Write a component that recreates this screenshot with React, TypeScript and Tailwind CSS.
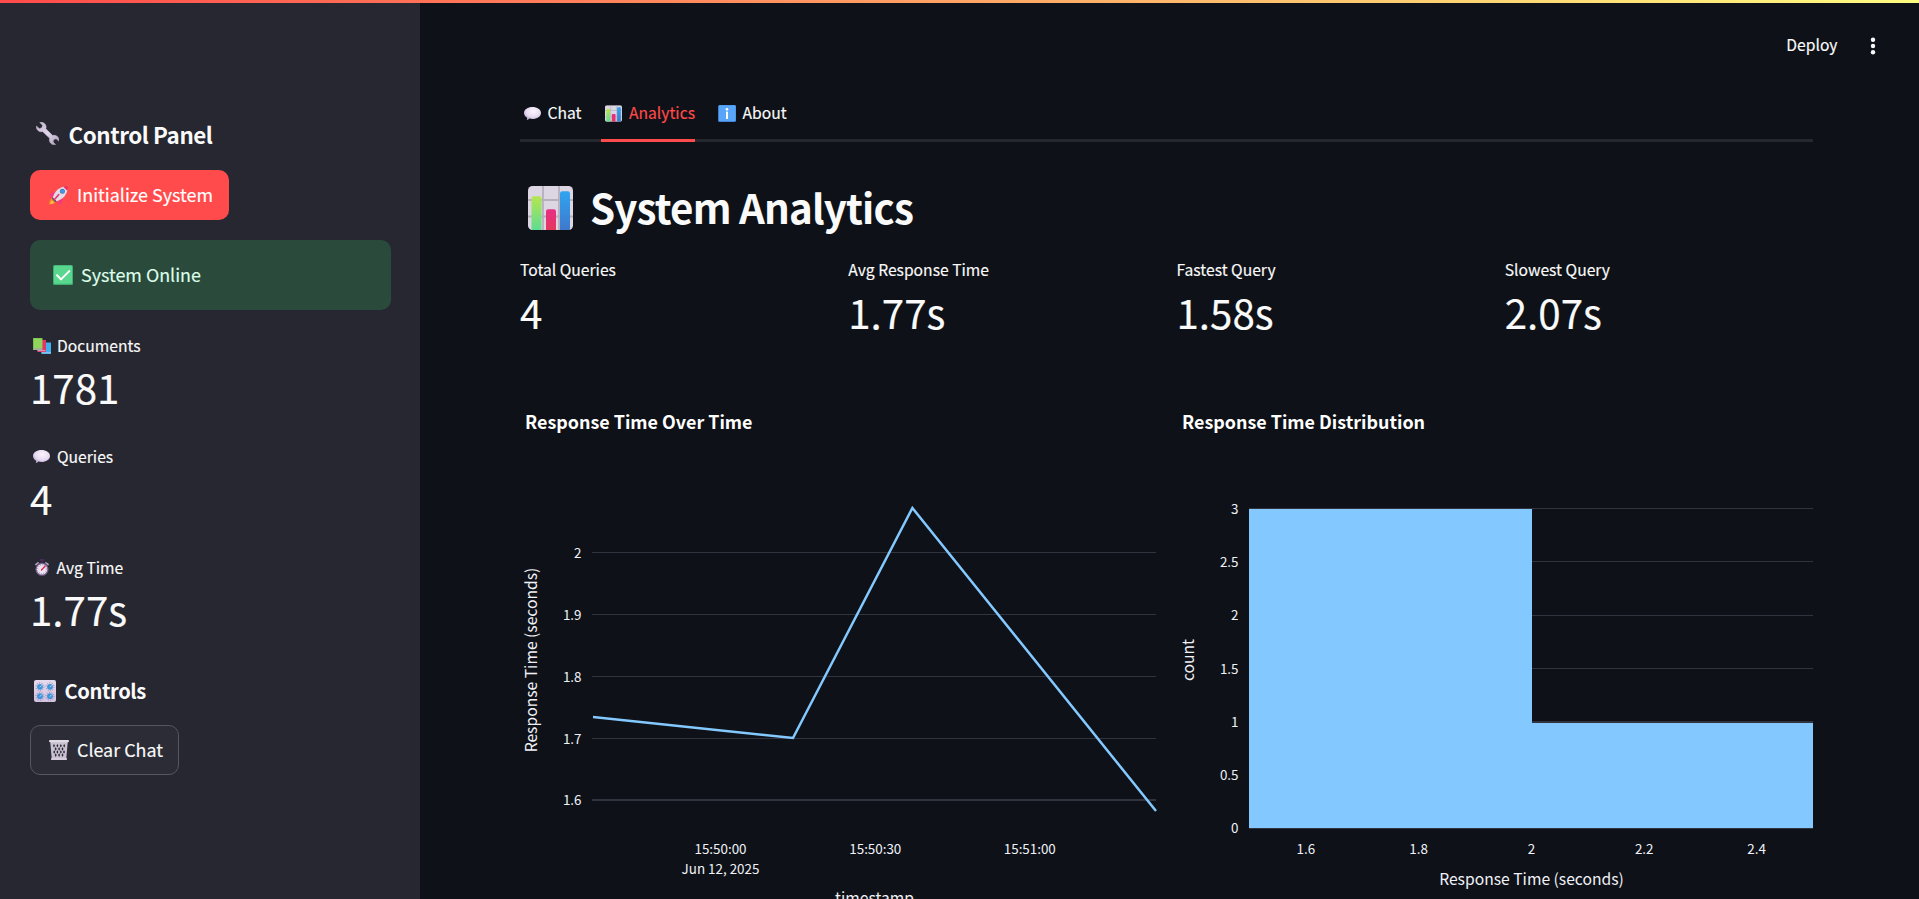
import type { ReactNode } from "react";

const FONT = "font-['Noto_Sans_CJK_SC','Noto_Sans_CJK_JP',sans-serif]";

/* ---------- icons ---------- */

type IconProps = { className: string };

function Wrench({ className }: IconProps) {
  return (
    <svg viewBox="0 0 32 32" className={className}>
      <defs>
        <linearGradient id="wr" x1="0" y1="0" x2="1" y2="1">
          <stop offset="0" stopColor="#bdb3c6" />
          <stop offset=".5" stopColor="#e2d5ee" />
          <stop offset="1" stopColor="#a79db5" />
        </linearGradient>
      </defs>
      <path
        fill="url(#wr)"
        stroke="url(#wr)"
        strokeWidth=".8"
        d="M5.200 .6C9.500-.4 13.600 2.200 14 6.500c.1 1-.1 2-.4 2.800l9.500 9.500c3.700-1.100 7.700 1 8.700 4.700.3 1 .3 2.100.1 3.100l-4-3.400-3.300 1.200-.9 3.400 3.600 3.600c-4.200 1-8.100-1.700-8.600-5.800-.1-1 0-2 .4-2.900L9.300 13.300C5.700 14.300 1.800 12.300.8 8.700c-.3-1-.4-2-.2-3l4 3.600 3.600-1.200 1-3.600z"
      />
    </svg>
  );
}

function Rocket({ className }: IconProps) {
  return (
    <svg viewBox="0 0 20 20" className={className}>
      <path d="M5 10 1 12.500 1.500 9 6 6.500z" fill="#f0388a" />
      <path d="M10.500 15 9 19.500 12.500 18.500 14 13.500z" fill="#f0388a" />
      <path d="M4 13c-3 .5-4 3-3.800 6.500C4 19.500 6.500 18.500 7 16z" fill="#f28a2a" />
      <path d="M2.800 15.500c-1 .8-1.500 2-1.300 3.300 1.500.2 2.700-.4 3.300-1.500z" fill="#ffc04d" />
      <path d="M3.800 12.800C5.500 6 10 1.500 19.300.7 18.600 9.500 14 14.500 7.200 16.200z" fill="#e4dbea" />
      <path d="M14 1.600c1.600-.5 3.400-.8 5.300-.9-.1 1.900-.4 3.600-.9 5.200z" fill="#f0305f" />
      <path d="M3.500 12.200 7.800 16.500 6.200 17 3 13.800z" fill="#5a4772" />
      <path d="M9.800 9.500 5.500 14.500" stroke="#e8366f" strokeWidth="1.600" strokeLinecap="round" />
      <circle cx="13.400" cy="6.300" r="2.500" fill="#5b6f9a" />
      <circle cx="13.400" cy="6.300" r="1.800" fill="#3d9cf2" />
    </svg>
  );
}

function Check({ className }: IconProps) {
  return (
    <svg viewBox="0 0 20 20" className={className}>
      <rect width="20" height="20" rx="1.500" fill="#3fae74" />
      <rect x="1" y=".8" width="18" height="18" rx="1" fill="#5ad78f" />
      <path d="m4 10.200 4 4.200 8.300-8.300" fill="none" stroke="#fff" strokeWidth="2" strokeLinecap="round" strokeLinejoin="round" />
    </svg>
  );
}

function Books({ className }: IconProps) {
  return (
    <svg viewBox="0 0 18 16" className={className}>
      <rect x="8.500" y="4.500" width="9.500" height="11.500" fill="#3fb0ee" />
      <rect x="8.500" y="14.300" width="9.500" height="1" fill="#a9c6e8" />
      <rect x="4.500" y="2" width="8.500" height="12" fill="#e83367" />
      <rect x="4.500" y="12" width="8" height="1.200" fill="#c59bb8" />
      <rect width="9.300" height="12" fill="#76b947" />
      <rect x=".8" y=".5" width="8.500" height="9.800" fill="#8fd75c" />
      <rect x=".5" y="10.500" width="8.800" height="1.200" fill="#b8a9c4" />
    </svg>
  );
}

function Bubble({ className }: IconProps) {
  return (
    <svg viewBox="0 0 17 13" className={className}>
      <defs>
        <radialGradient id="bu" cx=".55" cy=".35" r=".65">
          <stop offset="0" stopColor="#faf4fc" />
          <stop offset=".65" stopColor="#e6daf0" />
          <stop offset="1" stopColor="#b9a5cf" />
        </radialGradient>
      </defs>
      <path
        fill="url(#bu)"
        d="M8.500 0C13.200 0 17 2.500 17 6s-3.800 6-8.500 6c-1.200 0-2.300-.1-3.300-.4-.4.700-1.300 1.400-2.400 1.300.4-.7.400-1.500.1-2.300C1.100 9.500 0 7.900 0 6c0-3.500 3.800-6 8.500-6z"
      />
    </svg>
  );
}

function Stopwatch({ className }: IconProps) {
  return (
    <svg viewBox="0 0 14 17" className={className}>
      <rect x="4.500" y="0" width="5" height="2" rx=".8" fill="#4a2a5c" />
      <rect x="6" y="1.500" width="2" height="2.500" fill="#3e2750" />
      <path d="m1 5.500 2-1.600M13 5.500l-2-1.600" stroke="#a899b8" strokeWidth="1.800" strokeLinecap="round" />
      <circle cx="7" cy="10.300" r="6.500" fill="#77628d" />
      <circle cx="7" cy="10.300" r="5.200" fill="#ece4f2" />
      <circle cx="7" cy="10.300" r="4.300" fill="none" stroke="#8b7c9a" strokeWidth=".9" strokeDasharray=".8 1.450" />
      <path d="m6.500 11 3.700-4" stroke="#e0234f" strokeWidth="1.300" strokeLinecap="round" />
    </svg>
  );
}

function Knobs({ className }: IconProps) {
  const spots = [
    [6, 6.8],
    [16, 6.8],
    [6, 16.2],
    [16, 16.2],
  ];
  return (
    <svg viewBox="0 0 22 22" className={className}>
      <defs>
        <linearGradient id="kn" x1="0" y1="0" x2="0" y2="1">
          <stop offset="0" stopColor="#e6dbee" />
          <stop offset="1" stopColor="#d2c0e2" />
        </linearGradient>
      </defs>
      <rect width="22" height="22" rx="2" fill="url(#kn)" />
      {spots.map(([x, y]) => (
        <g key={`${x}-${y}`}>
          <circle cx={x} cy={y} r="4" fill="none" stroke="#8d839b" strokeWidth="1" strokeDasharray="1 1.500" />
          <circle cx={x} cy={y} r="2.900" fill="#3d94d8" />
          <path d={`M${x} ${y}l1.300-1`} stroke="#bfe4ff" strokeWidth=".9" strokeLinecap="round" />
        </g>
      ))}
    </svg>
  );
}

function Basket({ className }: IconProps) {
  return (
    <svg viewBox="0 0 20 20" className={className}>
      <path d="M1.200 1.500h17.600L17.200 19.500H2.800z" fill="#c9c1d0" />
      <g fill="#2b2a33">
        <path d="m5 4 1 1.800-1 1.800-1-1.800zM8.400 4l1 1.800-1 1.800-1-1.800zM11.800 4l1 1.800-1 1.800-1-1.800zM15.200 4l1 1.800-1 1.800-1-1.800z" />
        <path d="m6.700 7.100 1 1.800-1 1.800-1-1.800zM10.100 7.100l1 1.800-1 1.800-1-1.800zM13.500 7.100l1 1.800-1 1.800-1-1.800z" />
        <path d="m5.200 10.200 1 1.800-1 1.800-1-1.800zM8.400 10.200l1 1.800-1 1.800-1-1.800zM11.800 10.200l1 1.800-1 1.800-1-1.800zM15 10.200l1 1.800-1 1.800-1-1.800z" />
        <path d="m6.700 13.300 1 1.800-1 1.800-1-1.800zM10.100 13.300l1 1.800-1 1.800-1-1.800zM13.500 13.300l1 1.800-1 1.800-1-1.800z" />
      </g>
      <rect x="0" y="0" width="20" height="2.200" rx="1" fill="#e0dae4" />
      <rect x="2" y="18" width="16" height="2" rx=".8" fill="#d5cdda" />
    </svg>
  );
}

function BarChart({ className }: IconProps) {
  return (
    <svg viewBox="0 0 45 44" className={className}>
      <defs>
        <linearGradient id="bg" x1="0" y1="0" x2="0" y2="1">
          <stop offset="0" stopColor="#b5e64e" />
          <stop offset="1" stopColor="#5fdc93" />
        </linearGradient>
        <linearGradient id="br" x1="0" y1="0" x2="0" y2="1">
          <stop offset="0" stopColor="#e82f86" />
          <stop offset="1" stopColor="#e4385c" />
        </linearGradient>
        <linearGradient id="bb" x1="0" y1="0" x2="0" y2="1">
          <stop offset="0" stopColor="#30a5f0" />
          <stop offset="1" stopColor="#3f78cc" />
        </linearGradient>
        <clipPath id="bc">
          <rect width="45" height="44" rx="4.500" />
        </clipPath>
      </defs>
      <g clipPath="url(#bc)">
        <rect width="45" height="44" fill="#dcd5e2" />
        <path d="M15 0v44M31 0v44M0 14h45M0 30.500h45" stroke="#b6afbd" strokeWidth="1.800" />
        <path d="M3.500 44V12.500a2.200 2.200 0 0 1 2.200-2.200h5.600a2.200 2.200 0 0 1 2.200 2.200V44z" fill="url(#bg)" />
        <path d="M18 44V25.500a2.200 2.200 0 0 1 2.200-2.200h5.600a2.200 2.200 0 0 1 2.200 2.200V44z" fill="url(#br)" />
        <path d="M32 44V7.500a2.200 2.200 0 0 1 2.200-2.200h5.600A2.200 2.200 0 0 1 42 7.500V44z" fill="url(#bb)" />
      </g>
    </svg>
  );
}

function Info({ className }: IconProps) {
  return (
    <svg viewBox="0 0 18 17" className={className}>
      <rect width="18" height="17" rx="1.500" fill="#3f78c4" />
      <rect x=".9" y=".3" width="16.800" height="15.900" rx="1" fill="#58a6fa" />
      <circle cx="9" cy="4.200" r="1.300" fill="#fff" />
      <rect x="8" y="6.500" width="2" height="7.500" rx=".6" fill="#fff" />
    </svg>
  );
}

/* ---------- sidebar ---------- */

function Metric({ icon, label, value }: { icon?: ReactNode; label: string; value: string }) {
  return (
    <div className="h-[111px]">
      <div className="flex h-7 items-start text-[15.67px] leading-[27px]">
        {icon}
        <span>{label}</span>
      </div>
      <div className="text-[40.3px] leading-[54px]">{value}</div>
    </div>
  );
}

function Sidebar() {
  return (
    <aside className="flex w-[420px] shrink-0 flex-col bg-[#262730] pt-[119px] pr-[29px] pl-[30px]">
      <h2 className="flex h-[30px] items-center text-[22.4px] leading-[30px] font-semibold tracking-[-0.45px] [-webkit-text-stroke:0]">
        <Wrench className="mr-[10px] mb-px ml-[5.500px] h-[23px] w-[23px]" />
        Control Panel
      </h2>
      <button className="mt-[21px] flex h-[50px] w-[199px] items-center rounded-[10px] bg-[#ff4b4b] pb-[2px] pl-[19px] text-[17.9px] text-white">
        <Rocket className="mt-[2px] mr-[8px] h-5 w-5" />
        Initialize System
      </button>
      <div className="mt-5 flex h-[70px] items-center rounded-[10px] bg-[#2a4b3c] pb-px pl-[23px] text-[17.9px] text-[#dffde9]">
        <Check className="mr-[8px] h-5 w-5" />
        System Online
      </div>
      <div className="mt-[22px]">
        <Metric icon={<Books className="mt-[6px] mr-[6px] ml-[3px] h-4 w-[18px]" />} label="Documents" value="1781" />
        <Metric icon={<Bubble className="mt-[7px] mr-[7px] ml-[3px] h-[13px] w-[17px]" />} label="Queries" value="4" />
        <Metric icon={<Stopwatch className="mt-[5px] mr-[8px] ml-[4.500px] h-[17px] w-[14px]" />} label="Avg Time" value="1.77s" />
      </div>
      <h3 className="mt-[12px] flex h-7 items-center text-[20.15px] leading-7 font-semibold tracking-[-0.42px] [-webkit-text-stroke:0]">
        <Knobs className="mr-[8.500px] mb-px ml-1 h-[22px] w-[22px]" />
        Controls
      </h3>
      <button className="mt-[20px] flex h-[50px] w-[149px] items-center rounded-[10px] border border-[#55565f] bg-[#2b2c36] pb-[2px] pl-[18px] text-[17.9px]">
        <Basket className="mt-[2px] mr-[8px] h-5 w-5" />
        Clear Chat
      </button>
    </aside>
  );
}

/* ---------- charts ---------- */

const TICK = "fill-[#f0f2f7] text-[13.4px]";
const AXIS = "fill-[#f0f2f7] text-[15.67px]";

function LineChart() {
  const yTicks = [
    { label: "2", y: 552.5, h: 1 },
    { label: "1.9", y: 614.5, h: 1 },
    { label: "1.8", y: 676.5, h: 1 },
    { label: "1.7", y: 738.5, h: 1 },
    { label: "1.6", y: 800, h: 2 },
  ];
  const xTicks = [
    { label: "15:50:00", x: 720.5 },
    { label: "15:50:30", x: 875.3 },
    { label: "15:51:00", x: 1029.8 },
  ];
  return (
    <svg viewBox="520 400 637 499" className="block h-[499px] w-[637px]">
      <text x="525" y="429" className="fill-white text-[17.9px] font-bold">
        Response Time Over Time
      </text>
      {yTicks.map((t) => (
        <g key={t.label}>
          <line x1="592" x2="1156" y1={t.y} y2={t.y} stroke="#31333f" strokeWidth={t.h} />
          <text x="581.500" y={t.y + 5.5 - t.h / 2 + 0.3} textAnchor="end" className={TICK}>
            {t.label}
          </text>
        </g>
      ))}
      <polyline points="593,717 793,738 912.4,508 1156,811" fill="none" stroke="#83c9ff" strokeWidth="2.500" />
      {xTicks.map((t) => (
        <text key={t.label} x={t.x} y="854" textAnchor="middle" className={TICK}>
          {t.label}
        </text>
      ))}
      <text x="720.5" y="874" textAnchor="middle" className={TICK}>
        Jun 12, 2025
      </text>
      <text x="874.500" y="904" textAnchor="middle" className={AXIS}>
        timestamp
      </text>
      <text transform="translate(537.300 660) rotate(-90)" textAnchor="middle" className={AXIS}>
        Response Time (seconds)
      </text>
    </svg>
  );
}

function Histogram() {
  const yTicks = [
    { label: "3", y: 508.5, h: 1, base: 514 },
    { label: "2.5", y: 561.5, h: 1, base: 567 },
    { label: "2", y: 615.5, h: 1, base: 620 },
    { label: "1.5", y: 668.5, h: 1, base: 674 },
    { label: "1", y: 722, h: 2, base: 727 },
    { label: "0.5", y: 775.5, h: 1, base: 780 },
    { label: "0", y: 828.5, h: 1, base: 833 },
  ];
  const xTicks = [
    { label: "1.6", x: 1305.9 },
    { label: "1.8", x: 1418.6 },
    { label: "2", x: 1531.4 },
    { label: "2.2", x: 1644.2 },
    { label: "2.4", x: 1756.6 },
  ];
  return (
    <svg viewBox="1176 400 637 499" className="block h-[499px] w-[637px]">
      <text x="1182" y="429" className="fill-white text-[17.9px] font-bold">
        Response Time Distribution
      </text>
      {yTicks.map((t) => (
        <g key={t.label}>
          <line x1="1249" x2="1813" y1={t.y} y2={t.y} stroke="#31333f" strokeWidth={t.h} />
          <text x="1238.500" y={t.base} textAnchor="end" className={TICK}>
            {t.label}
          </text>
        </g>
      ))}
      <path d="M1249 509h283v214h281v105h-564z" fill="#83c9ff" />
      {xTicks.map((t) => (
        <text key={t.label} x={t.x} y="854" textAnchor="middle" className={TICK}>
          {t.label}
        </text>
      ))}
      <text x="1531.500" y="885" textAnchor="middle" className={AXIS}>
        Response Time (seconds)
      </text>
      <text transform="translate(1194 660) rotate(-90)" textAnchor="middle" className={AXIS}>
        count
      </text>
    </svg>
  );
}

/* ---------- main ---------- */

function Tabs() {
  return (
    <nav className="flex h-[52px] items-stretch border-b-[3px] border-[#26272f] text-[15.67px]">
      <div className="flex items-center pb-[3px] pl-1">
        <Bubble className="mr-[6.500px] h-[13px] w-[17px]" />
        <span className="w-[53.500px]">Chat</span>
      </div>
      <div className="mb-[-3px] flex w-[94px] items-center border-b-[3px] border-[#ff4b4b] pb-[3px] pl-1 text-[#ff4b4b]">
        <BarChart className="mr-[7px] h-[17px] w-[17px]" />
        Analytics
      </div>
      <div className="ml-[23px] flex items-center pb-[3px]">
        <Info className="mr-[6.500px] h-[17px] w-[18px]" />
        About
      </div>
    </nav>
  );
}

export default function App() {
  const stats = [
    { label: "Total Queries", value: "4" },
    { label: "Avg Response Time", value: "1.77s" },
    { label: "Fastest Query", value: "1.58s" },
    { label: "Slowest Query", value: "2.07s" },
  ];
  return (
    <div
      className={`relative flex h-[899px] w-[1919px] overflow-hidden bg-[#0e1117] text-[#fafafa] [-webkit-text-stroke:0.15px_currentColor] ${FONT}`}
    >
      <div className="absolute inset-x-0 top-0 h-[3px] bg-[linear-gradient(90deg,#ff4b4b,#fffd80)]" />
      <Sidebar />
      <main className="flex grow flex-col">
        <header className="flex h-[90px] items-center justify-end pr-[43.500px] text-[15.67px]">
          <span className="mr-[32px]">Deploy</span>
          <svg viewBox="0 0 6 18" className="mt-px h-[18px] w-[6px]" fill="#fafafa">
            <circle cx="3" cy="2.700" r="2.200" />
            <circle cx="3" cy="9" r="2.200" />
            <circle cx="3" cy="15.300" r="2.200" />
          </svg>
        </header>
        <div className="flex w-[1393px] flex-col pl-[100px]">
          <Tabs />
          <h1 className="mt-[38px] flex h-[54px] items-center text-[40.3px] leading-[54px] font-semibold tracking-[-0.85px] [-webkit-text-stroke:0]">
            <BarChart className="mr-[17px] mb-[-2px] ml-2 h-11 w-[45px]" />
            System Analytics
          </h1>
          <div className="mt-[22px] grid h-[144px] grid-cols-4 gap-5">
            {stats.map((s) => (
              <div key={s.label}>
                <div className="h-[29px] text-[15.67px] leading-[27px]">{s.label}</div>
                <div className="text-[40.3px] leading-[54px]">{s.value}</div>
              </div>
            ))}
          </div>
          <div className="flex justify-between gap-[19px]">
            <LineChart />
            <Histogram />
          </div>
        </div>
      </main>
    </div>
  );
}
